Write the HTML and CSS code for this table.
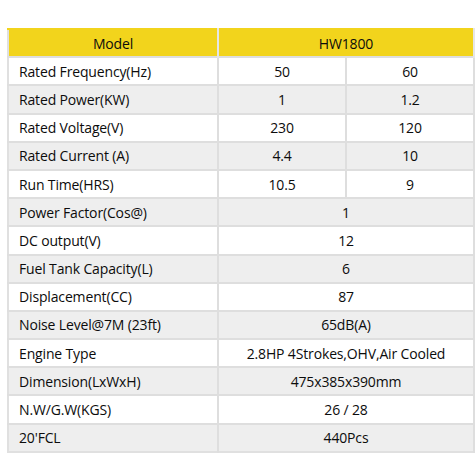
FILE: index.html
```html
<!DOCTYPE html>
<html lang="en">

<head>
     <meta charset="UTF-8">
     <meta name="viewport" content="width=device-width, initial-scale=1.0">
     <title>HW1800 Specifications</title>
     <link rel="stylesheet" href="styles.css">
</head>

<body>

     <div id="wrapper">
          <table class="spec-table">
               <colgroup>
                    <col class="col-label">
                    <col class="col-value">
                    <col class="col-value">
               </colgroup>
               <thead>
                    <tr>
                         <th>Model</th>
                         <th colspan="2">HW1800</th>
                    </tr>
               </thead>
               <tbody>
                    <tr>
                         <td>Rated Frequency(Hz)</td>
                         <td>50</td>
                         <td>60</td>
                    </tr>
                    <tr>
                         <td>Rated Power(KW)</td>
                         <td>1</td>
                         <td>1.2</td>
                    </tr>
                    <tr>
                         <td>Rated Voltage(V)</td>
                         <td>230</td>
                         <td>120</td>
                    </tr>
                    <tr>
                         <td>Rated Current (A)</td>
                         <td>4.4</td>
                         <td>10</td>
                    </tr>
                    <tr>
                         <td>Run Time(HRS)</td>
                         <td>10.5</td>
                         <td>9</td>
                    </tr>
                    <tr>
                         <td>Power Factor(Cos@)</td>
                         <td colspan="2">1</td>
                    </tr>
                    <tr>
                         <td>DC output(V)</td>
                         <td colspan="2">12</td>
                    </tr>
                    <tr>
                         <td>Fuel Tank Capacity(L)</td>
                         <td colspan="2">6</td>
                    </tr>
                    <tr>
                         <td>Displacement(CC)</td>
                         <td colspan="2">87</td>
                    </tr>
                    <tr>
                         <td>Noise Level@7M (23ft)</td>
                         <td colspan="2">65dB(A)</td>
                    </tr>
                    <tr>
                         <td>Engine Type</td>
                         <td colspan="2">2.8HP 4Strokes,OHV,Air Cooled</td>
                    </tr>
                    <tr>
                         <td>Dimension(LxWxH)</td>
                         <td colspan="2">475x385x390mm</td>
                    </tr>
                    <tr>
                         <td>N.W/G.W(KGS)</td>
                         <td colspan="2">26 / 28</td>
                    </tr>
                    <tr>
                         <td>20'FCL</td>
                         <td colspan="2">440Pcs</td>
                    </tr>
               </tbody>
          </table>
     </div>

</body>

</html>
```

FILE: styles.css
```css
* {
     padding: 0;
     margin: 0;
     box-sizing: border-box;
     font-family: 'Open Sans', 'Liberation Sans', sans-serif;
}

html,
body {
     width: 100%;
     height: 100%;
     background: #ffffff;
}

#wrapper {
     padding: 28px 2px 0 7px;
}

.spec-table {
     width: 466px;
     border-collapse: collapse;
     table-layout: fixed;
     border: 2px solid #e0e0e0;
     color: #0c0c0c;
     font-size: 14px;
     letter-spacing: -0.15px;
}

.spec-table .col-label {
     width: 210px;
}

.spec-table .col-value {
     width: 128px;
}

.spec-table th,
.spec-table td {
     height: 28.2px;
     border: 1px solid #dedede;
     border-width: 2px 2px 0 0;
     text-align: center;
     font-weight: 400;
     white-space: nowrap;
}

.spec-table th {
     background: #f2d41c;
     border-color: #f2d41c #e6e6e6 #e0e0e0 #f2d41c;
}

.spec-table td:first-child {
     text-align: left;
     padding-left: 10px;
}

.spec-table tbody tr:nth-child(even) td {
     background: #eeeeee;
}
```
